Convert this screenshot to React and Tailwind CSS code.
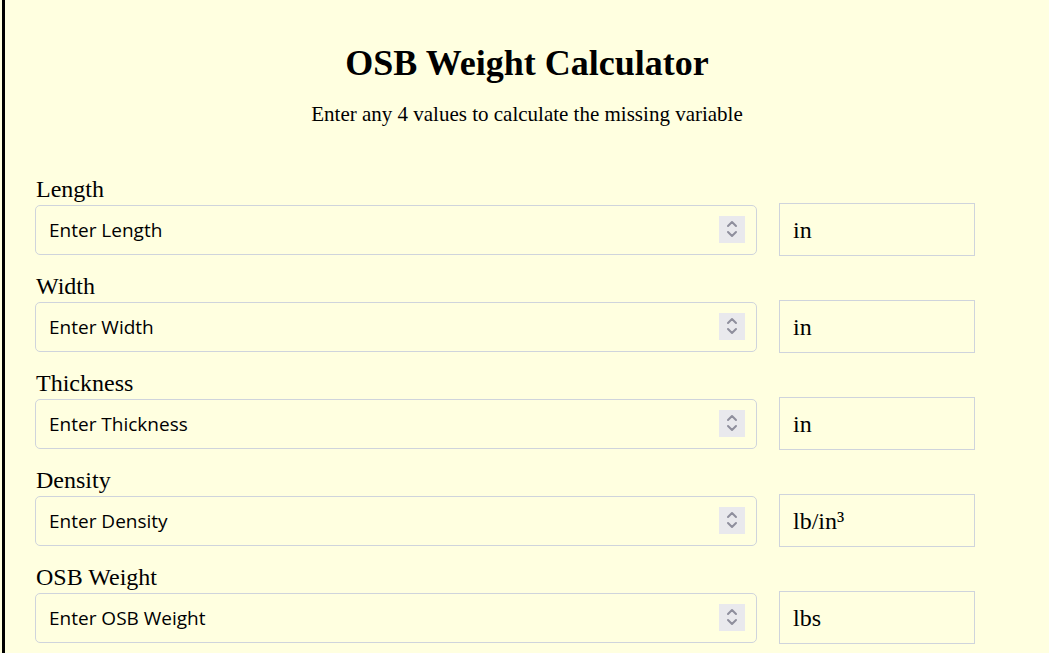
const fields = [
  { label: "Length", placeholder: "Enter Length", unit: "in" },
  { label: "Width", placeholder: "Enter Width", unit: "in" },
  { label: "Thickness", placeholder: "Enter Thickness", unit: "in" },
  { label: "Density", placeholder: "Enter Density", unit: "lb/in³" },
  { label: "OSB Weight", placeholder: "Enter OSB Weight", unit: "lbs" },
];

function Spinner() {
  return (
    <div className="absolute right-[12px] top-[11px] w-[26px] h-[27px] bg-[#e9e9ed] flex items-center justify-center">
      <svg width="14" height="22" viewBox="0 0 14 22" fill="none" stroke="#8f8f9d" strokeWidth="2" strokeLinecap="round" strokeLinejoin="round">
        <path d="M3 8 L7 4 L11 8" />
        <path d="M3 14 L7 18 L11 14" />
      </svg>
    </div>
  );
}

export default function App() {
  return (
    <div className="min-h-[653px] bg-[#ffffe0] pl-[2px] font-['Liberation_Serif',serif] text-black">
      <div className="min-h-[653px] border-l-[3px] border-black pt-[42px]">
        <h1 className="text-center text-[36px] font-bold leading-[42px]">OSB Weight Calculator</h1>
        <p className="text-center text-[21px] leading-[24px] mt-[18px]">
          Enter any 4 values to calculate the missing variable
        </p>
        <form className="pl-[30px] mt-[50px] flex flex-col gap-[17px]">
          {fields.map((f) => (
            <div key={f.label}>
              <label className="block text-[24px] leading-[26px] pl-[1px] mb-[1px]">{f.label}</label>
              <div className="flex items-center gap-[22px]">
                <div className="relative w-[722px] h-[50px]">
                  <input
                    type="text"
                    placeholder={f.placeholder}
                    className="w-full h-full rounded-[5px] border border-[#cfd4dc] bg-transparent pl-[13px] pr-[50px] text-[19px] font-['Open_Sans',sans-serif] placeholder:text-black outline-none"
                  />
                  <Spinner />
                </div>
                <div className="w-[196px] h-[53px] border border-[#cfd4dc] flex items-center pl-[13px] text-[24px]">
                  {f.unit}
                </div>
              </div>
            </div>
          ))}
        </form>
      </div>
    </div>
  );
}
